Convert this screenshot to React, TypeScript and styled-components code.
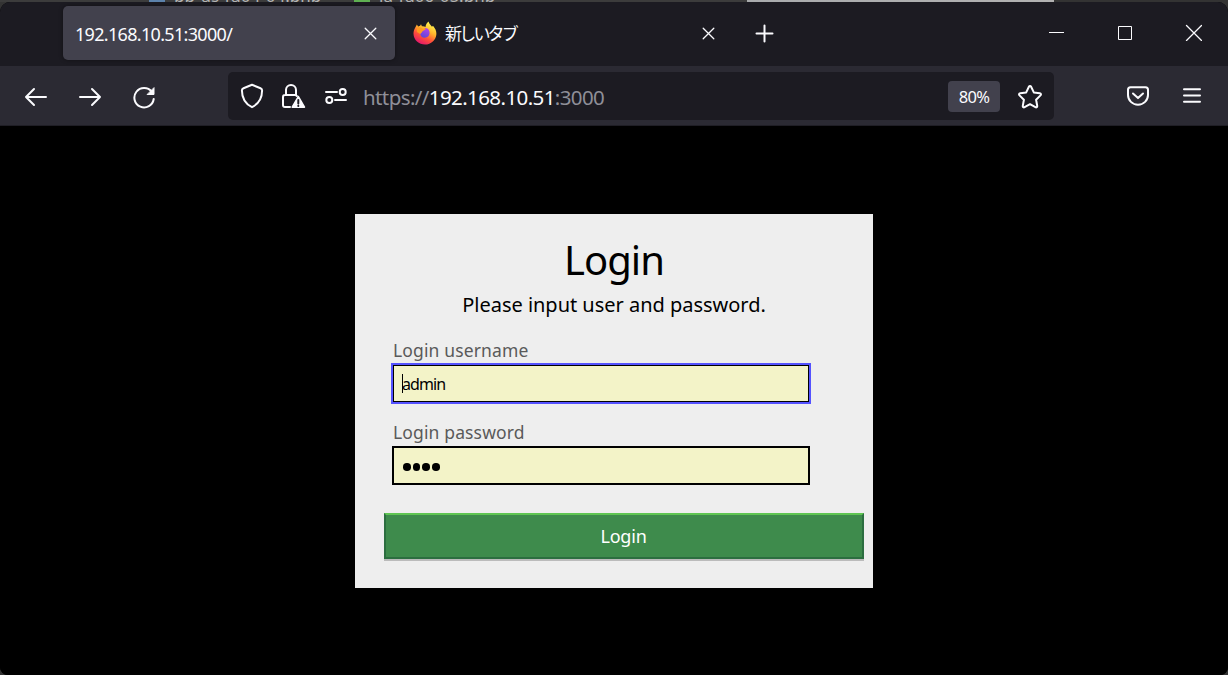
import React from 'react';
import styled, { createGlobalStyle } from 'styled-components';

const GlobalStyle = createGlobalStyle`
  * { box-sizing: border-box; }
  body { margin: 0; background: #000; overflow: hidden; }
`;

const uiFont = '"Noto Sans", "Noto Sans CJK JP", sans-serif';

const Screen = styled.div`
  width: 1228px;
  height: 675px;
  display: flex;
  flex-direction: column;
  background: #333;
  font-family: ${uiFont};
  color: #fbfbfe;
`;

const Backdrop = styled.div`
  height: 2px;
  flex: none;
  display: flex;
  overflow: hidden;
  background: linear-gradient(90deg, #3c3c3c 747px, #a9abad 747px, #b2b2b2 1054px, #333 1054px);
`;

const BackdropTab = styled.span<{ $gap: number; $dot: string }>`
  display: flex;
  height: 2px;
  margin-left: ${(p) => p.$gap}px;
  font-size: 17px;
  line-height: 2px;
  color: #b4b4b4;
  white-space: nowrap;
  &::before {
    content: '';
    width: 16px;
    height: 2px;
    margin-right: 9px;
    background: ${(p) => p.$dot};
  }
`;

const BackdropName = styled.span<{ $width: number }>`
  width: ${(p) => p.$width}px;
  margin-top: -5px;
`;

const Browser = styled.div`
  flex: 1;
  display: flex;
  flex-direction: column;
  overflow: hidden;
  border-radius: 10px 10px 8px 8px;
  background: #000;
`;

const TabBar = styled.div`
  height: 64px;
  flex: none;
  display: flex;
  align-items: flex-start;
  padding: 4px 0 0 63px;
  background: #1c1b22;
`;

const Tab = styled.div<{ $active?: boolean }>`
  width: ${(p) => (p.$active ? 332 : 338)}px;
  height: 54px;
  display: flex;
  align-items: center;
  padding: 0 18px 0 ${(p) => (p.$active ? 12 : 18)}px;
  border-radius: 5px;
  background: ${(p) => (p.$active ? '#42414d' : 'transparent')};
  box-shadow: ${(p) => (p.$active ? '0 0 4px rgba(0, 0, 0, 0.4)' : 'none')};
`;

const TabTitle = styled.span`
  flex: 1;
  padding-top: 1px;
  font-size: 18px;
  line-height: 24px;
  letter-spacing: -0.68px;
  white-space: nowrap;
`;

const NewTabTitle = styled(TabTitle)`
  margin-left: 8px;
  padding-top: 0;
  font-size: 17px;
  letter-spacing: -2.8px;
  font-family: "Noto Sans CJK JP", sans-serif;
`;

const NewTab = styled.div`
  height: 54px;
  display: flex;
  align-items: center;
  margin-left: 22px;
`;

const WindowControls = styled.div`
  flex: 1;
  height: 54px;
  display: flex;
  align-items: center;
  justify-content: flex-end;
  gap: 53px;
  padding: 0 26px 2px 0;
`;

const Toolbar = styled.div`
  height: 60px;
  flex: none;
  display: flex;
  align-items: center;
  background: #2b2a33;
  box-shadow: inset 0 -1px 0 #1f1e25;
`;

const Navigation = styled.div`
  width: 228px;
  display: flex;
  align-items: center;
  gap: 30px;
  padding: 2px 0 0 24px;
`;

const AddressBar = styled.div`
  width: 826px;
  height: 48px;
  display: flex;
  align-items: center;
  padding: 0 12px;
  border-radius: 5px;
  background: #1c1b22;
`;

const SecurityIcons = styled.div`
  display: flex;
  gap: 18px;
`;

const Address = styled.div`
  flex: 1;
  margin-left: 15px;
  padding-top: 2px;
  font-size: 20.5px;
  line-height: 28px;
  letter-spacing: -0.6px;
  color: #8f8f98;
`;

const Host = styled.span`
  color: #fbfbfe;
`;

const ZoomBadge = styled.div`
  width: 52px;
  height: 31px;
  margin-right: 17px;
  border-radius: 4px;
  background: #42414d;
  font-size: 16.5px;
  line-height: 32px;
  letter-spacing: -0.65px;
  text-align: center;
`;

const ToolbarActions = styled.div`
  flex: 1;
  display: flex;
  justify-content: flex-end;
  gap: 30px;
  padding-right: 24px;
`;

const Icon = styled.svg`
  flex: none;
  display: block;
  fill: none;
  stroke: #fbfbfe;
  stroke-width: 2;
  stroke-linecap: round;
  stroke-linejoin: round;
`;

const ThinIcon = styled(Icon)`
  stroke-width: 1.3;
`;

const WindowIcon = styled(Icon)`
  stroke-width: 1;
  stroke-linecap: butt;
  stroke-linejoin: miter;
`;

const Page = styled.main`
  flex: 1;
  display: flex;
  justify-content: center;
  align-items: flex-start;
  padding-top: 88px;
  background: #000;
`;

const LoginCard = styled.form`
  width: 518px;
  height: 374px;
  display: flex;
  flex-direction: column;
  padding: 19px 9px 0 29px;
  background: #eee;
  color: #000;
`;

const Title = styled.h1`
  height: 54px;
  margin: 0 20px 0 0;
  font-size: 40px;
  line-height: 54px;
  font-weight: 400;
  letter-spacing: -1px;
  text-align: center;
`;

const Hint = styled.p`
  height: 30px;
  margin: 3px 20px 0 0;
  font-size: 20px;
  line-height: 30px;
  letter-spacing: -0.02px;
  text-align: center;
`;

const Fields = styled.div`
  padding-top: 17px;
`;

const Field = styled.div`
  height: 82px;
  display: flex;
  flex-direction: column;
  align-items: flex-start;
  padding-left: 8px;
`;

const FieldLabel = styled.span`
  height: 27px;
  padding-left: 1px;
  font-size: 17.5px;
  line-height: 26px;
  letter-spacing: 0.14px;
  color: #5a5a5a;
`;

const FieldBox = styled.span<{ $focused?: boolean }>`
  width: 418px;
  height: 39px;
  display: flex;
  align-items: center;
  padding-left: 8px;
  background: #f3f3c8;
  border: 2px solid #000;
  ${(p) =>
    p.$focused &&
    `
    border: 1px solid #5452ff;
    outline: 1px solid #5452ff;
    box-shadow: inset 0 0 0 1px #000;
    padding-left: 9px;
  `}
`;

const Caret = styled.span`
  width: 1px;
  height: 19px;
  margin-right: -1px;
  background: #000;
`;

const FieldValue = styled.span`
  font-size: 16px;
  line-height: 24px;
  letter-spacing: -0.9px;
`;

const Dots = styled.span`
  display: flex;
  gap: 2.2px;
  padding: 3px 0 0 1px;
`;

const Dot = styled.i`
  width: 7.5px;
  height: 7.5px;
  border-radius: 50%;
  background: #000;
`;

const Submit = styled.button`
  height: 46px;
  flex: none;
  margin-top: 12px;
  padding: 0 1px 0 0;
  border: 2px solid #2c6e40;
  border-top-color: #5fc552;
  background: #3e8b4c;
  box-shadow: 0 2px 0 #bbb;
  color: #fff;
  font-family: ${uiFont};
  font-size: 18px;
  line-height: 42px;
  letter-spacing: -0.2px;
`;

const CloseTab = () => (
  <ThinIcon width="13" height="13" viewBox="0 0 13 13">
    <path d="M1.2 1.2l10.6 10.6M11.8 1.2L1.2 11.8" />
  </ThinIcon>
);

const FirefoxLogo = () => (
  <svg width="24" height="24" viewBox="0 0 24 24">
    <defs>
      <linearGradient id="flame" x1="0.8" y1="0.1" x2="0.3" y2="1">
        <stop offset="0" stopColor="#fff44f" />
        <stop offset="0.35" stopColor="#ffb52b" />
        <stop offset="0.65" stopColor="#ff5038" />
        <stop offset="1" stopColor="#e3146f" />
      </linearGradient>
      <linearGradient id="globe" x1="0.7" y1="0" x2="0.3" y2="1">
        <stop offset="0" stopColor="#b343e8" />
        <stop offset="1" stopColor="#5b46d6" />
      </linearGradient>
    </defs>
    <path
      d="M2.4 6.2L3.9 3.5l1.2 2 2-.7.9-1.6.9 2.1c1.6-.2 2.8.2 3.6.7C12.7 3.6 14 1.7 15.6.5c.3 2.3 2.1 3.6 3.4 5.200l1-1c2 2.500 3.600 5 3.400 8.200C23.100 19 18 23.500 12 23.500S.6 18.900.5 12.700C.4 10.200 1.300 8 2.400 6.200z"
      fill="url(#flame)"
    />
    <path d="M7.500 10c2-.6 3.500-2.300 5-3 2.900.4 4.300 2.600 4.100 5.300-.2 2.800-2.200 4.400-4.700 4.400-2.900 0-4.700-2-4.700-4.500z" fill="url(#globe)" />
    <path d="M3.900 7.200c2-1 4.100-1.200 5.300.4l3.600.2c-.2 1.700-2.800 1.600-3.300 2.500-.2 1.300-1.700 1.700-2.100 2.800L4 11z" fill="#ff9a1f" />
  </svg>
);

export default function App() {
  return (
    <>
      <GlobalStyle />
      <Screen>
        <Backdrop>
          <BackdropTab $gap={149} $dot="#5c82ab">
            <BackdropName $width={155}>pp-us-fu04-04.php</BackdropName>
          </BackdropTab>
          <BackdropTab $gap={25} $dot="#5fb052">
            <BackdropName $width={140}>ja-fu06-05.php</BackdropName>
          </BackdropTab>
        </Backdrop>
        <Browser>
          <TabBar>
            <Tab $active>
              <TabTitle>192.168.10.51:3000/</TabTitle>
              <CloseTab />
            </Tab>
            <Tab>
              <FirefoxLogo />
              <NewTabTitle>新しいタブ</NewTabTitle>
              <CloseTab />
            </Tab>
            <NewTab>
              <Icon width="19" height="19" viewBox="0 0 19 19">
                <path d="M9.500 1.500v16M1.500 9.500h16" />
              </Icon>
            </NewTab>
            <WindowControls>
              <WindowIcon width="15" height="15" viewBox="0 0 15 15">
                <path d="M0 7.500h15" />
              </WindowIcon>
              <WindowIcon width="15" height="15" viewBox="0 0 15 15">
                <path d="M1.500 1.500h13v13h-13z" />
              </WindowIcon>
              <ThinIcon width="17" height="17" viewBox="0 0 17 17">
                <path d="M1.500 1.500l15 15M16.500 1.500L1.500 16.500" />
              </ThinIcon>
            </WindowControls>
          </TabBar>
          <Toolbar>
            <Navigation>
              <Icon width="24" height="24" viewBox="0 0 24 24">
                <path d="M22 12H2M10 4L2 12l8 8" />
              </Icon>
              <Icon width="24" height="24" viewBox="0 0 24 24">
                <path d="M2 12h20M14 4l8 8-8 8" />
              </Icon>
              <Icon width="24" height="24" viewBox="0 0 24 24">
                <path d="M19.800 6.800A9.700 9.700 0 1 0 21.700 14" />
                <path d="M22 3v6.500h-6.500z" fill="#fbfbfe" strokeWidth="1" />
              </Icon>
            </Navigation>
            <AddressBar>
              <SecurityIcons>
                <Icon width="24" height="26" viewBox="0 0 24 26">
                  <path d="M12 1.800L20.500 5.200c1 .4 1.600 1 1.600 2 0 8-3.600 13.700-10.100 17C5.500 20.900 1.900 15.200 1.900 7.200c0-1 .6-1.600 1.600-2z" />
                </Icon>
                <Icon width="24" height="26" viewBox="0 0 24 26">
                  <path d="M8 24H3c-1.400 0-2-.7-2-2v-8c0-1.400.7-2 2-2h10c1 0 1.600.4 1.900 1M4 12V7a5 5 0 0 1 10 0v5" />
                  <path d="M16.300 13.500L22.500 24.200H10.200z" fill="#fbfbfe" strokeWidth="1.500" />
                  <path d="M16.300 17v3.400M16.300 22.800v.1" stroke="#1c1b22" />
                </Icon>
                <Icon width="24" height="26" viewBox="0 0 24 26">
                  <path d="M2 9h11M11 17h11" />
                  <circle cx="18.700" cy="9" r="3" />
                  <circle cx="5.300" cy="17" r="3" />
                </Icon>
              </SecurityIcons>
              <Address>
                https://<Host>192.168.10.51</Host>:3000
              </Address>
              <ZoomBadge>80%</ZoomBadge>
              <Icon width="25" height="25" viewBox="0 0 25 25">
                <path d="M11.900 2.700c.5-1 1.700-1 2.200 0l2.700 5.700 6 .8c1.200.2 1.500 1.400.7 2.200l-4.400 4.300 1.100 6.100c.2 1.200-.8 1.900-1.800 1.400l-5.400-3-5.400 3c-1 .5-2-.2-1.800-1.400l1.100-6.100L2.500 11.400c-.8-.8-.5-2 .7-2.200l6-.8z" />
              </Icon>
            </AddressBar>
            <ToolbarActions>
              <Icon width="24" height="24" viewBox="0 0 24 24">
                <path d="M4.500 3.200h15c1.700 0 2.500.8 2.500 2.500V11a10 9.700 0 0 1-20 0V5.700c0-1.700.8-2.500 2.500-2.500zM7 9.500l5 4.600 5-4.600" />
              </Icon>
              <Icon width="24" height="24" viewBox="0 0 24 24">
                <path d="M4 5.200h16M4 11.500h16M4 17.800h16" />
              </Icon>
            </ToolbarActions>
          </Toolbar>
          <Page>
            <LoginCard>
              <Title>Login</Title>
              <Hint>Please input user and password.</Hint>
              <Fields>
                <Field>
                  <FieldLabel>Login username</FieldLabel>
                  <FieldBox $focused>
                    <Caret />
                    <FieldValue>admin</FieldValue>
                  </FieldBox>
                </Field>
                <Field>
                  <FieldLabel>Login password</FieldLabel>
                  <FieldBox>
                    <Dots>
                      <Dot />
                      <Dot />
                      <Dot />
                      <Dot />
                    </Dots>
                  </FieldBox>
                </Field>
              </Fields>
              <Submit type="button">Login</Submit>
            </LoginCard>
          </Page>
        </Browser>
      </Screen>
    </>
  );
}
